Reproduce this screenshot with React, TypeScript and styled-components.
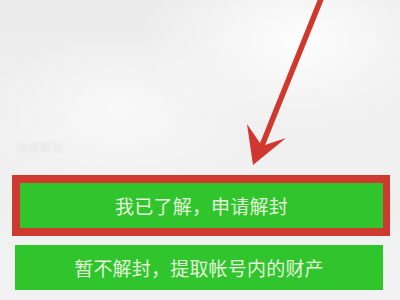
import React from 'react';
import styled, { createGlobalStyle } from 'styled-components';

const GlobalStyle = createGlobalStyle`
  html, body {
    margin: 0;
    padding: 0;
    background: #efefef;
  }
  * {
    box-sizing: border-box;
  }
`;

const Page = styled.div`
  position: relative;
  width: 400px;
  height: 300px;
  overflow: hidden;
  display: flex;
  flex-direction: column;
  font-family: 'Noto Sans CJK SC', 'Noto Sans', sans-serif;
  background:
    radial-gradient(ellipse 160px 90px at 300px 40px, rgba(255, 255, 255, 0.9), rgba(255, 255, 255, 0) 100%),
    radial-gradient(ellipse 140px 80px at 120px 110px, rgba(255, 255, 255, 0.6), rgba(255, 255, 255, 0) 100%),
    linear-gradient(180deg, #ebebeb 0%, #f0f0f0 45%, #eef0ee 70%, #f2f2f4 100%);
`;

const TopArea = styled.div`
  height: 175px;
  flex-shrink: 0;
  display: flex;
  align-items: flex-end;
  padding: 0 0 20px 16px;
`;

const FaintCaption = styled.span`
  font-size: 11px;
  color: #e4e4e4;
  letter-spacing: 1px;
  filter: blur(0.8px);
`;

const Highlight = styled.div`
  margin-left: 12px;
  width: 378px;
  height: 61px;
  border: 8px solid #cf3a30;
  border-right-width: 7px;
  display: flex;
`;

const ActionButton = styled.button<{ $inset?: boolean }>`
  display: flex;
  align-items: center;
  justify-content: center;
  border: none;
  padding: 0;
  cursor: pointer;
  background: #30c42d;
  color: #e4f4dc;
  font-family: inherit;
  font-size: 19px;
  letter-spacing: 0.2px;
  ${({ $inset }) =>
    $inset
      ? `
    flex: 1;
    height: 45px;
  `
      : `
    margin: 9px 0 0 15px;
    width: 368px;
    height: 45px;
  `}
`;

const ArrowLayer = styled.svg`
  position: absolute;
  inset: 0;
  pointer-events: none;
`;

const Arrow = () => (
  <ArrowLayer width={400} height={300} viewBox="0 0 400 300">
    <line x1={323} y1={-6} x2={261} y2={148} stroke="#d0372e" strokeWidth={5.5} />
    <polygon points="247,124 253,165 286,138 262,146" fill="#d0372e" />
  </ArrowLayer>
);

export default function App() {
  return (
    <>
      <GlobalStyle />
      <Page>
        <TopArea>
          <FaintCaption>申请解封</FaintCaption>
        </TopArea>
        <Highlight>
          <ActionButton $inset>我已了解，申请解封</ActionButton>
        </Highlight>
        <ActionButton>暂不解封，提取帐号内的财产</ActionButton>
        <Arrow />
      </Page>
    </>
  );
}
